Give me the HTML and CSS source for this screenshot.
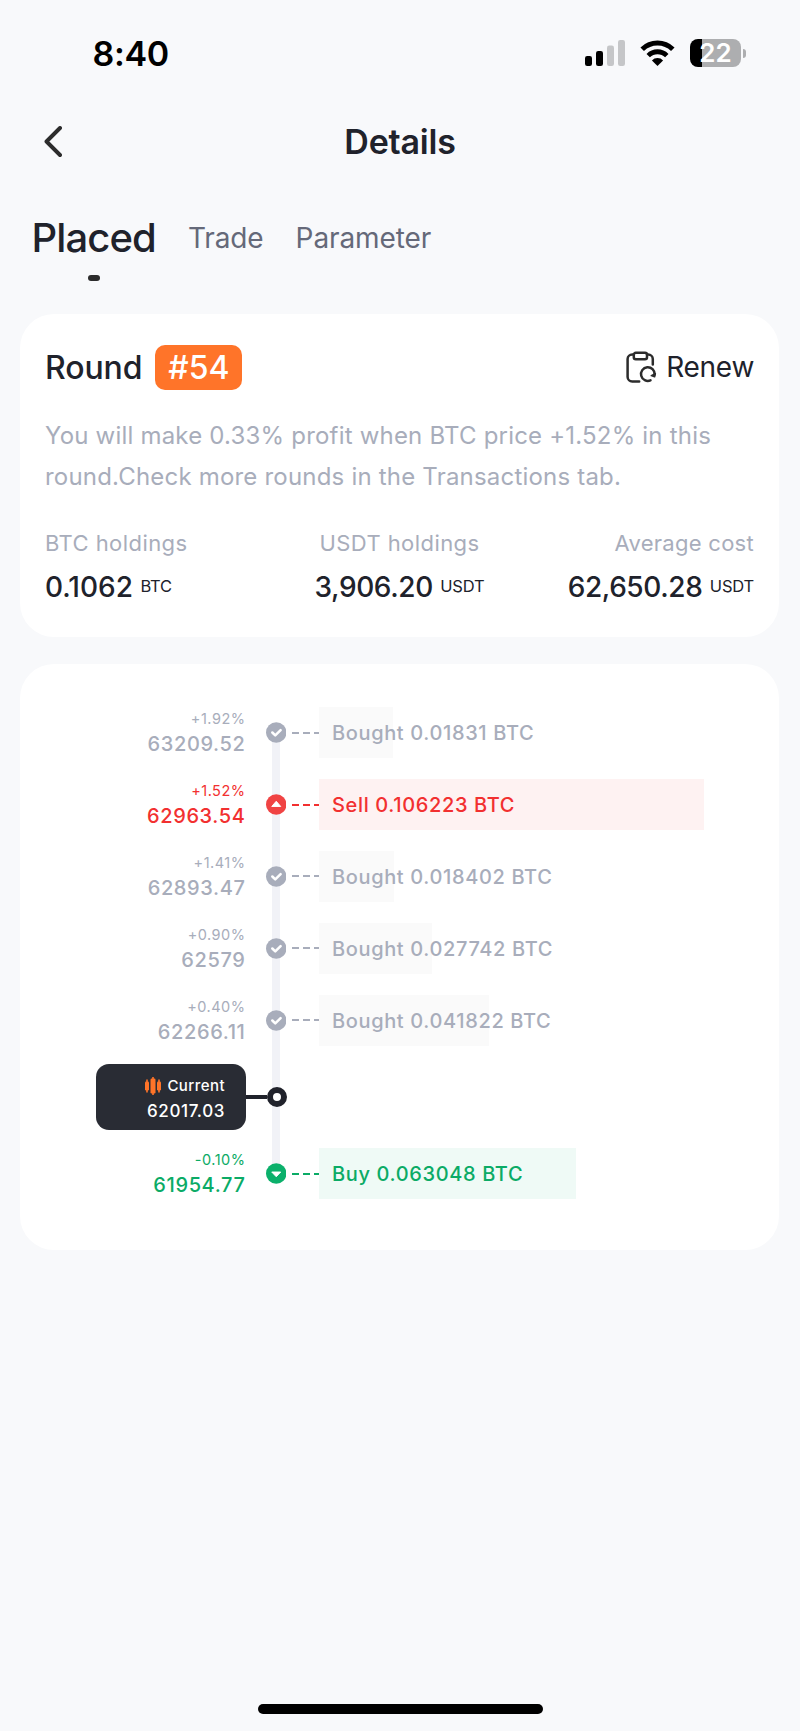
FILE: index.html
```html
<!DOCTYPE html>
<html lang="en">
<head>
    <meta charset="UTF-8">
    <meta name="viewport" content="width=device-width, initial-scale=1.0">
    <title>Details</title>
    <link rel="stylesheet" href="styles.css">
</head>
<body>
    <div class="status-bar">
        <span class="clock">8:40</span>
        <div class="status-icons">
            <svg class="signal" width="40" height="26" viewBox="0 0 40 26">
                <rect x="0" y="16" width="7" height="10" rx="2.2" fill="#000"/>
                <rect x="11" y="11" width="7" height="15" rx="2.2" fill="#000"/>
                <rect x="22" y="5.5" width="7" height="20.5" rx="2.2" fill="#c5c6c8"/>
                <rect x="33" y="0" width="7" height="26" rx="2.2" fill="#c5c6c8"/>
            </svg>
            <svg class="wifi" width="35" height="26" viewBox="0 0 35 26">
                <path d="M2.2 9.3a21.8 21.8 0 0 1 30.6 0" fill="none" stroke="#000" stroke-width="5"/>
                <path d="M8.2 15.6a13.2 13.2 0 0 1 18.6 0" fill="none" stroke="#000" stroke-width="4.8"/>
                <path d="M17.5 26l-5.6-5.6a8 8 0 0 1 11.2 0z" fill="#000"/>
            </svg>
            <div class="battery">22</div>
            <div class="battery-cap"></div>
        </div>
    </div>

    <div class="nav">
        <svg class="back" width="18" height="31" viewBox="0 0 18 31">
            <path d="M16 2L2.5 15.5L16 29" fill="none" stroke="#2c2c2c" stroke-width="3.9" stroke-linecap="round" stroke-linejoin="round"/>
        </svg>
        <h1 class="title">Details</h1>
    </div>

    <div class="tabs">
        <div class="tab active">Placed</div>
        <div class="tab">Trade</div>
        <div class="tab">Parameter</div>
    </div>

    <div class="card summary">
        <div class="summary-header">
            <span class="round">Round</span>
            <span class="badge">#54</span>
            <div class="renew">
                <svg width="32" height="32" viewBox="0 0 32 32" fill="none" stroke="#2c2c2c" stroke-width="2.5" stroke-linecap="round" stroke-linejoin="round">
                    <path d="M8.5 3.5H7.2A4.6 4.6 0 0 0 2.6 8v18a4.6 4.6 0 0 0 4.6 4.5h7"/>
                    <path d="M22 3.5h1.2A4.6 4.6 0 0 1 27.8 8v5.5"/>
                    <rect x="8.8" y="1.7" width="13.2" height="6.6" rx="2"/>
                    <path d="M25.5 29.3A6.8 6.8 0 1 1 29.6 23.5"/>
                    <path d="M26.3 24.6l3.3 1.2.7-3.2z" fill="#2c2c2c" stroke-width="1.6"/>
                </svg>
                <span>Renew</span>
            </div>
        </div>
        <p class="note">You will make 0.33% profit when BTC price +1.52% in this<br>round.Check more rounds in the Transactions tab.</p>
        <div class="stats">
            <div class="stat">
                <div class="label">BTC holdings</div>
                <div class="value"><span>0.1062</span> <small>BTC</small></div>
            </div>
            <div class="stat">
                <div class="label">USDT holdings</div>
                <div class="value"><span>3,906.20</span> <small>USDT</small></div>
            </div>
            <div class="stat">
                <div class="label">Average cost</div>
                <div class="value"><span>62,650.28</span> <small>USDT</small></div>
            </div>
        </div>
    </div>

    <div class="card timeline">
        <div class="row">
            <div class="level"><small>+1.92%</small><span>63209.52</span></div>
            <div class="node">
                <svg width="21" height="21" viewBox="0 0 21 21"><circle cx="10.5" cy="10.5" r="10.5" fill="#a8adbb"/><path d="M6.5 10.5l3 3 5.5-5.5" fill="none" stroke="#fff" stroke-width="2.6" stroke-linecap="round" stroke-linejoin="round"/></svg>
                <i></i><i></i><i></i>
            </div>
            <div class="order"><div class="bar" style="width: 74px"></div><span>Bought 0.01831 BTC</span></div>
        </div>
        <div class="row sell">
            <div class="level"><small>+1.52%</small><span>62963.54</span></div>
            <div class="node">
                <svg width="21" height="21" viewBox="0 0 21 21"><circle cx="10.5" cy="10.5" r="10.5" fill="#f04343"/><path d="M10.5 7.2l4.6 5.3H5.900z" fill="#fff" stroke="#fff" stroke-linejoin="round"/></svg>
                <i></i><i></i><i></i>
            </div>
            <div class="order"><div class="bar" style="width: 385px"></div><span>Sell 0.106223 BTC</span></div>
        </div>
        <div class="row">
            <div class="level"><small>+1.41%</small><span>62893.47</span></div>
            <div class="node">
                <svg width="21" height="21" viewBox="0 0 21 21"><circle cx="10.5" cy="10.5" r="10.5" fill="#a8adbb"/><path d="M6.5 10.5l3 3 5.5-5.5" fill="none" stroke="#fff" stroke-width="2.6" stroke-linecap="round" stroke-linejoin="round"/></svg>
                <i></i><i></i><i></i>
            </div>
            <div class="order"><div class="bar" style="width: 75px"></div><span>Bought 0.018402 BTC</span></div>
        </div>
        <div class="row">
            <div class="level"><small>+0.90%</small><span>62579</span></div>
            <div class="node">
                <svg width="21" height="21" viewBox="0 0 21 21"><circle cx="10.5" cy="10.5" r="10.5" fill="#a8adbb"/><path d="M6.5 10.5l3 3 5.5-5.5" fill="none" stroke="#fff" stroke-width="2.6" stroke-linecap="round" stroke-linejoin="round"/></svg>
                <i></i><i></i><i></i>
            </div>
            <div class="order"><div class="bar" style="width: 113px"></div><span>Bought 0.027742 BTC</span></div>
        </div>
        <div class="row">
            <div class="level"><small>+0.40%</small><span>62266.11</span></div>
            <div class="node">
                <svg width="21" height="21" viewBox="0 0 21 21"><circle cx="10.5" cy="10.5" r="10.5" fill="#a8adbb"/><path d="M6.5 10.5l3 3 5.5-5.5" fill="none" stroke="#fff" stroke-width="2.6" stroke-linecap="round" stroke-linejoin="round"/></svg>
                <i></i><i></i><i></i>
            </div>
            <div class="order"><div class="bar" style="width: 170px"></div><span>Bought 0.041822 BTC</span></div>
        </div>
        <div class="row current">
            <div class="current-box">
                <div class="current-label">
                    <svg width="16" height="18" viewBox="0 0 16 18" fill="#ff7429">
                        <rect x="0" y="4.5" width="4" height="9" rx="1.2"/><rect x="1.2" y="2.5" width="1.6" height="13"/>
                        <rect x="5.5" y="1.5" width="5" height="15" rx="1.2"/><rect x="7.2" y="0" width="1.6" height="18"/>
                        <rect x="12" y="4.5" width="4" height="9" rx="1.2"/><rect x="13.2" y="2.5" width="1.6" height="13"/>
                    </svg>
                    <span>Current</span>
                </div>
                <div class="current-price">62017.03</div>
            </div>
            <div class="connector"></div>
            <div class="ring"></div>
        </div>
        <div class="row buy">
            <div class="level"><small>-0.10%</small><span>61954.77</span></div>
            <div class="node">
                <svg width="21" height="21" viewBox="0 0 21 21"><circle cx="10.5" cy="10.5" r="10.5" fill="#0bb06b"/><path d="M10.5 13.8l4.6-4.8H5.900z" fill="#fff" stroke="#fff" stroke-linejoin="round"/></svg>
                <i></i><i></i><i></i>
            </div>
            <div class="order"><div class="bar" style="width: 257px"></div><span>Buy 0.063048 BTC</span></div>
        </div>
    </div>

    <div class="home-bar"></div>
</body>
</html>
```
FILE: styles.css
```css
* {
    box-sizing: border-box;
}

body {
    margin: 0;
    height: 1731px;
    background-color: #f8f9fb;
    font-family: Inter, 'Liberation Sans', sans-serif;
    color: #20222b;
    display: flex;
    flex-direction: column;
}

.status-bar {
    height: 106px;
    padding: 0 54px 0 92.5px;
    display: flex;
    align-items: center;
    justify-content: space-between;
    color: #000;
}

.clock {
    font-size: 34px;
    font-weight: 600;
    letter-spacing: -0.3px;
}

.status-icons {
    display: flex;
    align-items: center;
}

.wifi {
    margin: 0 15px;
}

.battery {
    width: 51px;
    height: 28px;
    border-radius: 8px;
    background: linear-gradient(to right, #000 12px, #adaeb0 12px);
    color: #fff;
    font-size: 26px;
    font-weight: 600;
    line-height: 28px;
    text-align: center;
}

.battery-cap {
    width: 3px;
    height: 9px;
    margin-left: 2px;
    border-radius: 0 4px 4px 0;
    background-color: #adaeb0;
}

.nav {
    height: 71px;
    padding: 0 44px;
    display: flex;
    align-items: center;
}

.title {
    flex: 1;
    margin: 0 18px 0 0;
    text-align: center;
    font-size: 34px;
    font-weight: 600;
    letter-spacing: -0.2px;
}

.tabs {
    height: 137px;
    padding: 31px 31.5px 0;
    display: flex;
    gap: 32px;
}

.tab {
    line-height: 60px;
    font-size: 28px;
    letter-spacing: -0.1px;
    color: #656979;
}

.tab.active {
    font-size: 40px;
    font-weight: 500;
    letter-spacing: -0.9px;
    color: #20222b;
}

.tab.active::after {
    content: "";
    display: block;
    width: 12px;
    height: 6px;
    margin: 7px auto 0;
    border-radius: 3px;
    background-color: #2c2c2c;
}

.card {
    margin: 0 21px 0 20px;
    background-color: #fff;
    border-radius: 34px;
}

.summary {
    height: 323px;
    padding: 30px 25px 0;
}

.summary-header {
    display: flex;
    align-items: center;
    height: 46px;
}

.round {
    font-size: 32px;
    font-weight: 500;
    letter-spacing: -0.1px;
}

.badge {
    margin-left: 13px;
    width: 87px;
    height: 45px;
    border-radius: 10px;
    background-color: #ff7429;
    color: #fff;
    font-size: 32px;
    font-weight: 500;
    line-height: 45px;
    text-align: center;
}

.renew {
    margin-left: auto;
    display: flex;
    align-items: center;
    gap: 9px;
    font-size: 28px;
    letter-spacing: -0.3px;
}

.note {
    margin: 25px 0 0;
    font-size: 24px;
    line-height: 41px;
    letter-spacing: 0.2px;
    color: #a8adbb;
    white-space: nowrap;
}

.stats {
    margin-top: 31px;
    display: grid;
    grid-template-columns: 1fr 1fr 1fr;
}

.stat:nth-child(2) {
    text-align: center;
}

.stat:nth-child(3) {
    text-align: right;
}

.label {
    font-size: 22px;
    line-height: 30px;
    letter-spacing: 0.43px;
    color: #a8adbb;
}

.stat:nth-child(3) .label {
    letter-spacing: 0.28px;
}

.value {
    margin-top: 10px;
    font-size: 28px;
    font-weight: 500;
    line-height: 38px;
    white-space: nowrap;
}

.stat + .stat .value span {
    letter-spacing: -0.4px;
}

.value small {
    font-size: 16.5px;
    font-weight: 400;
    letter-spacing: -0.2px;
    vertical-align: 5px;
    line-height: 1;
}

.timeline {
    position: relative;
    height: 586px;
    margin-top: 27px;
    padding-top: 33px;
}

/* vertical track behind the nodes */
.timeline::before {
    content: "";
    position: absolute;
    left: 252px;
    top: 69px;
    width: 8px;
    height: 441px;
    background-color: #f1f2f7;
}

.row {
    position: relative;
    height: 71.8px;
    display: flex;
    align-items: center;
    color: #a8adbb;
}

.row.sell {
    color: #f23030;
}

.row.buy {
    color: #0bab66;
}

.level {
    width: 225.5px;
    padding-bottom: 1px;
    display: flex;
    flex-direction: column;
    align-items: flex-end;
    font-size: 20px;
    font-weight: 450;
    line-height: 26px;
    letter-spacing: 0.62px;
}

.level small {
    font-size: 14.5px;
    font-weight: 400;
    line-height: 24px;
    letter-spacing: 0.5px;
}

.node {
    width: 73.5px;
    padding-left: 20.5px;
    display: flex;
    align-items: center;
}

.node svg {
    margin-right: 6px;
}

.node i {
    width: 7px;
    height: 2px;
    margin-right: 4px;
    background-color: currentColor;
}

.node i:last-child {
    width: 5px;
    margin-right: 0;
}

.order {
    position: relative;
    height: 51px;
    font-size: 20px;
    font-weight: 450;
    line-height: 52px;
    letter-spacing: 0.64px;
    padding-left: 13px;
}

.order span {
    position: relative;
}

.bar {
    position: absolute;
    left: 0;
    top: 0;
    height: 51px;
    background-color: #fafafa;
}

.sell .bar {
    background-color: #fef2f2;
}

.buy .bar {
    background-color: #effaf6;
}

.row.current {
    height: 81.8px;
    padding-left: 76px;
}

.current-box {
    width: 150px;
    height: 66px;
    padding: 9px 21px 0 0;
    border-radius: 13px;
    background-color: #292c34;
    color: #fff;
    text-align: right;
    font-size: 17px;
    line-height: 24px;
    font-weight: 500;
    letter-spacing: 0.6px;
}

.current-label {
    display: flex;
    align-items: center;
    justify-content: flex-end;
    gap: 6px;
    font-size: 15px;
    line-height: 26px;
    letter-spacing: 0.45px;
}

.connector {
    width: 21px;
    height: 4px;
    background-color: #20222b;
}

.ring {
    width: 20px;
    height: 20px;
    border: 6px solid #20222b;
    border-radius: 50%;
    background-color: #fff;
}

.home-bar {
    width: 285px;
    height: 10px;
    margin: auto auto 17px;
    border-radius: 5px;
    background-color: #000;
}
```
